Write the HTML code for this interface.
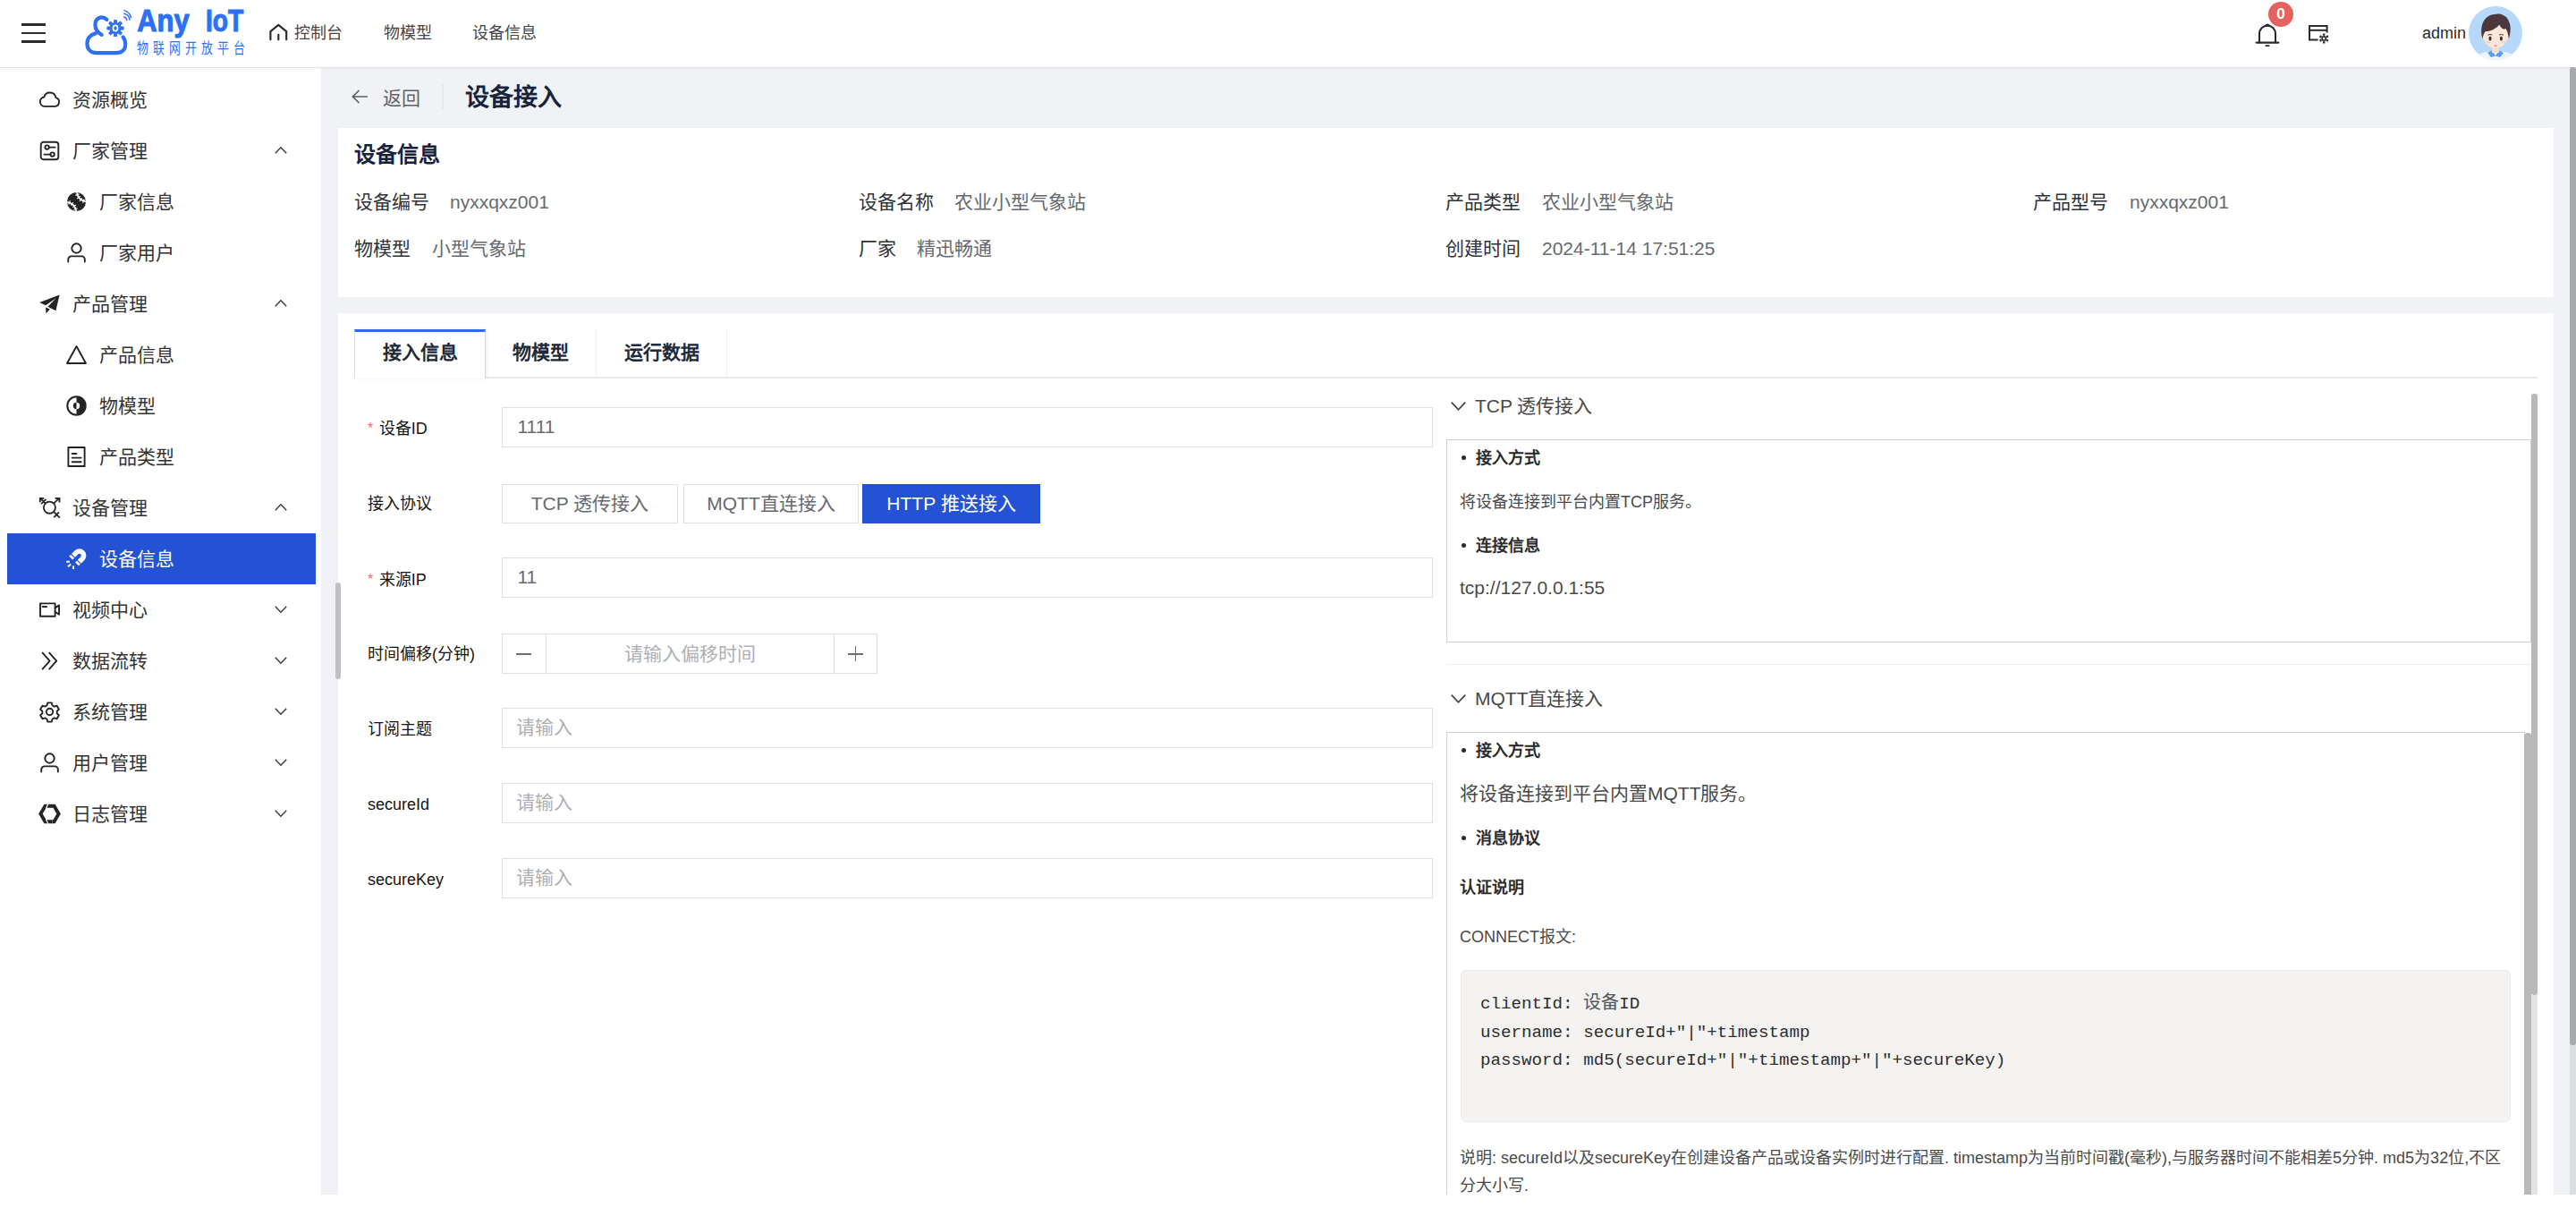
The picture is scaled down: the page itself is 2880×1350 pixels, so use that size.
<!DOCTYPE html>
<html lang="zh-CN">
<head>
<meta charset="utf-8">
<title>设备接入</title>
<style>
*{box-sizing:border-box;margin:0;padding:0}
html,body{width:2880px;height:1350px;overflow:hidden;background:#fff}
body{font-family:"Liberation Sans",sans-serif;color:#333;position:relative;-webkit-font-smoothing:antialiased}
.abs{position:absolute}
.t{position:absolute;white-space:nowrap;line-height:1}
svg{position:absolute;overflow:visible}
/* page */
#bg{left:359px;top:75px;width:2521px;height:1260px;background:#f0f2f5}
#hdr{left:0;top:0;width:2880px;height:75.5px;background:#fff;border-bottom:1.6px solid #e3e5e8;box-shadow:0 1px 3px rgba(0,21,41,.04)}
#side{left:0;top:75px;width:359px;height:1260px;background:#fff}
.nav{font-size:18px;color:#454545;top:28px}
/* menu */
.mi{position:absolute;left:0;width:359px;height:57px;font-size:21px;color:#333}
.mi .tx{position:absolute;top:18.2px;line-height:21px;white-space:nowrap}
.mi.p .tx{left:81px}
.mi.c .tx{left:111px}
.mi svg.ic{top:17px;width:23px;height:23px}
.mi.p svg.ic{left:44px}
.mi.c svg.ic{left:74px}
.mi svg.ar{left:307px;top:21px;width:14px;height:14px}
.mi svg.ic{color:#242424}
.mi.on svg.ic{color:#fff}
.mi.on{left:8px;width:345px;background:#2452d4;color:#fff}
.mi.on .tx{left:103px}
.mi.on svg.ic{left:66px}

/* main */
.card{position:absolute;left:378px;width:2477px;background:#fff}
.dl{font-size:21px;color:#2f3238}
.dv{font-size:21px;color:#666a70}
.tab{position:absolute;top:368px;height:54px;font-size:21px;font-weight:700;color:#1d2a3a;text-align:center;line-height:51px;white-space:nowrap}
.fl{position:absolute;left:411px;font-size:18px;color:#151515;white-space:nowrap;line-height:18px}
.fl i{font-style:normal;color:#f56c6c;margin-right:6.5px;position:relative;top:-1px;font-size:16px}
.inp{position:absolute;left:561px;width:1041px;height:45px;border:1.5px solid #dcdfe6;background:#fff;font-size:21px;color:#666a70;line-height:41.4px;padding-left:16.5px;white-space:nowrap}
.inp.ph{color:#aeb0b6;padding-left:14.5px}
.rb{position:absolute;top:541px;height:44px;border:1.5px solid #dcdfe6;font-size:21px;color:#666a70;text-align:center;line-height:41px;white-space:nowrap;background:#fff}
.ch{position:absolute;left:1649px;font-size:21px;color:#484848;white-space:nowrap;line-height:21px}
.box{position:absolute;left:1617px;border:1.5px solid #cfcfcf;background:#fff}
.b18{position:absolute;font-size:18px;font-weight:700;color:#2a2a2a;white-space:nowrap;line-height:18px}
.p18{position:absolute;font-size:18px;color:#4a4a4a;white-space:nowrap;line-height:18px}
.p21{position:absolute;font-size:21px;color:#4a4a4a;white-space:nowrap;line-height:21px}
.dot{position:absolute;width:5px;height:5px;border-radius:50%;background:#2a2a2a;left:1634px}
</style>
</head>
<body>
<div id="bg" class="abs"></div>
<div id="side" class="abs"></div>
<div id="hdr" class="abs"></div>

<!-- HEADER -->
<div class="abs" style="left:24px;top:26px;width:27px;height:2.5px;background:#2b2b2b"></div>
<div class="abs" style="left:24px;top:35.5px;width:27px;height:2.5px;background:#2b2b2b"></div>
<div class="abs" style="left:24px;top:45px;width:27px;height:2.5px;background:#2b2b2b"></div>

<!-- logo -->
<svg id="logo" style="left:90px;top:8px" width="190" height="60" viewBox="90 8 190 60">
  <g fill="none" stroke="#2d6ff5" stroke-width="4.2" stroke-linecap="round" stroke-linejoin="round">
    <path d="M119.4 21.8 C113.6 16.8 106.4 20.4 106.4 27.6 C106.4 32.6 109 36.4 113.6 38.8"/>
    <path d="M106.8 37.4 C101 38.6 97.4 43 97.4 48.8 C97.4 55.4 102 59.2 108 59.2 L130 59.2 C137 59.2 140.2 54.6 140.2 49.6 C140.2 46 139.2 43.4 137.6 41.4"/>
  </g>
  <g id="gear" transform="translate(129 31.5)" fill="#2d6ff5">
    <circle r="6.6"/>
    <g id="teeth">
      <rect x="-1.9" y="-9.6" width="3.8" height="19.2" rx=".6"/>
      <rect x="-1.9" y="-9.6" width="3.8" height="19.2" rx=".6" transform="rotate(45)"/>
      <rect x="-1.9" y="-9.6" width="3.8" height="19.2" rx=".6" transform="rotate(90)"/>
      <rect x="-1.9" y="-9.6" width="3.8" height="19.2" rx=".6" transform="rotate(135)"/>
    </g>
    <ellipse rx="3.4" ry="3.9" fill="#fff"/>
    <ellipse rx="1.6" ry="2.3" fill="#2d6ff5"/>
  </g>
  <g fill="none" stroke="#2d6ff5" stroke-width="1.5" stroke-linecap="round">
    <path d="M138.6 19 A4 4 0 0 1 141.8 22.6"/>
    <path d="M138.8 15.2 A8 8 0 0 1 145 22"/>
    <path d="M139 11.6 A11.5 11.5 0 0 1 146.6 19.6"/>
  </g>
  <g style="font-family:'Liberation Sans',sans-serif;font-weight:700" font-size="34.5" fill="#2d6ff5" stroke="#2d6ff5" stroke-width="1.1" stroke-linejoin="round">
    <text x="153.2" y="35.3" textLength="58.5" lengthAdjust="spacingAndGlyphs">Any</text>
    <text x="230" y="35.3" textLength="42.3" lengthAdjust="spacingAndGlyphs">IoT</text>
  </g>
  <text transform="translate(152.8 59.8) scale(.76 1)" style="font-family:'Liberation Sans',sans-serif" font-size="17" letter-spacing="6.75" fill="#2d6ff5">物联网开放平台</text>
</svg>

<!-- nav -->
<svg style="left:300.6px;top:26px" width="20.6" height="19.6" viewBox="0 0 22 20" fill="none" stroke="#2b2b2b" stroke-width="2.3" stroke-linejoin="round" stroke-linecap="round"><path d="M1.5 19 V9.2 L11 1.6 L20.5 9.2 V19"/><path d="M11 13.2 V19"/></svg>
<div class="t nav" style="left:329px">控制台</div>
<div class="t nav" style="left:429px">物模型</div>
<div class="t nav" style="left:528px">设备信息</div>


<!-- header right -->
<svg style="left:2521px;top:24px" width="28" height="29" viewBox="0 0 28 29" fill="none" stroke="#2b2b2b" stroke-width="2.1" stroke-linecap="round" stroke-linejoin="round"><path d="M1.6 23.6 H26.4"/><path d="M5 23.4 V13.6 A9 9 0 0 1 23 13.6 V23.4"/><path d="M12.2 4.6 A1.9 1.9 0 0 1 15.8 4.6" stroke-width="1.8"/><path d="M12.4 27.2 H15.6" stroke-width="1.8"/></svg>
<div class="abs" style="left:2536px;top:2px;width:28px;height:28px;border-radius:50%;background:#e4625f;color:#fff;font-size:17px;font-weight:700;text-align:center;line-height:28px">0</div>
<svg style="left:2580px;top:27px" width="25" height="22" viewBox="0 0 25 22" fill="none" stroke="#2b2b2b" stroke-width="2"><path d="M11.6 17.6 H2 V2 H21.6 V9.4"/><path d="M2 6.8 H21.6"/><g transform="translate(18.2 16)" stroke-width="1.7"><circle r="2.1"/><path d="M0 -5.4 V-3.2 M0 5.4 V3.2 M4.7 -2.7 L2.8 -1.6 M-4.7 2.7 L-2.8 1.6 M4.7 2.7 L2.8 1.6 M-4.7 -2.7 L-2.8 -1.6" stroke-width="2.4"/></g></svg>
<div class="t" style="left:2708px;top:28px;font-size:18px;color:#2a2a2a">admin</div>
<svg id="avatar" style="left:2760px;top:7px" width="60" height="60" viewBox="0 0 60 60">
  <defs><clipPath id="avc"><circle cx="30" cy="30" r="30"/></clipPath></defs>
  <g clip-path="url(#avc)">
    <rect width="60" height="60" fill="#b5d8fb"/>
    <path d="M6 62 C8 52 18 50.5 30 50.5 C42 50.5 52 52 54 62 Z" fill="#eef4f7"/>
    <path d="M21 52 L25.5 49.5 L30 55 L34.5 49.5 L39 52 L35 57 L30 55.5 L25 57 Z" fill="#5b9df0"/>
    <rect x="26" y="42" width="8" height="10" fill="#f7ddd0"/>
    <ellipse cx="30" cy="32.5" rx="13.6" ry="14.4" fill="#fbe6da"/>
    <ellipse cx="16.2" cy="34.5" rx="2" ry="3" fill="#fbe6da"/><ellipse cx="43.8" cy="34.5" rx="2" ry="3" fill="#fbe6da"/>
    <path d="M15.4 37 C11.5 22 17 10 29 9 C35 7 43 10.5 45 17 C48 23 46.5 31 44.8 37 C44.4 31 43.4 28 41.5 25 C39.4 26.6 35.4 24 34.4 20.4 C30 26 23 28 18.8 28 C16.8 30.5 16 33 15.4 37 Z" fill="#4a383c"/>
    <ellipse cx="24" cy="36" rx="1.5" ry="2.5" fill="#3a2a2c"/><ellipse cx="36.4" cy="36" rx="1.5" ry="2.5" fill="#3a2a2c"/>
    <path d="M21.4 32.2 Q24 30.8 26.4 32 M34 32 Q36.4 30.8 39 32.2" stroke="#4a383c" stroke-width="1" fill="none"/>
    <ellipse cx="21.5" cy="40" rx="2.6" ry="1.6" fill="#f8c9c0" opacity=".7"/><ellipse cx="38.8" cy="40" rx="2.6" ry="1.6" fill="#f8c9c0" opacity=".7"/>
    <ellipse cx="30.2" cy="44.2" rx="1.7" ry=".9" fill="#ee8f95"/>
  </g>
</svg>

<!-- SIDEBAR -->
<div id="menu">
<div class="mi p" style="top:83px"><svg class="ic" viewBox="0 0 23 23" fill="none" stroke="currentColor" stroke-width="1.9" stroke-linecap="round" stroke-linejoin="round"><path d="M6.1 18.85 H17 A5 5 0 0 0 18.4 9.05 A6.7 6.7 0 0 0 5.3 8.5 A5.2 5.2 0 0 0 6.1 18.85 Z"/></svg><span class="tx">资源概览</span></div>
<div class="mi p" style="top:140px"><svg class="ic" viewBox="0 0 23 23" fill="none" stroke="currentColor" stroke-width="1.9" stroke-linecap="round" stroke-linejoin="round"><rect x="1.7" y="1.7" width="19.6" height="19.6" rx="3"/><circle cx="8.6" cy="7.6" r="2.2"/><path d="M10.9 7.6 H17.6"/><circle cx="14.6" cy="15.6" r="2.2"/><path d="M5.4 15.6 H12.3"/></svg><span class="tx">厂家管理</span><svg class="ar" viewBox="0 0 14 14" fill="none" stroke="#3c3c3c" stroke-width="1.45"><path d="M0.8 10.2 L7 3.8 L13.2 10.2"/></svg></div>
<div class="mi c" style="top:197px"><svg class="ic" viewBox="0 0 23 23"><defs><clipPath id="bc"><circle cx="11.5" cy="11.5" r="10.5"/></clipPath></defs><circle cx="11.5" cy="11.5" r="10.5" fill="currentColor"/><g clip-path="url(#bc)" fill="none" stroke="#fff"><circle cx="23" cy="0" r="11.2" stroke-width="1.8"/><circle cx="0" cy="23" r="11.2" stroke-width="1.8"/><path d="M20.1 8.5 L18.7 12.7 M17.7 7.3 L15.1 10.8 M15.7 5.3 L12.2 7.9 M14.5 2.9 L10.3 4.3 M2.9 14.5 L4.3 10.3 M5.3 15.7 L7.9 12.2 M7.3 17.7 L10.8 15.1 M8.5 20.1 L12.7 18.7" stroke-width="1.2"/></g></svg><span class="tx">厂家信息</span></div>
<div class="mi c" style="top:254px"><svg class="ic" viewBox="0 0 23 23" fill="none" stroke="currentColor" stroke-width="1.9" stroke-linecap="round" stroke-linejoin="round"><circle cx="11.5" cy="6.5" r="5.2"/><path d="M2.2 21.6 V19 A3.6 3.6 0 0 1 5.8 15.4 H17.2 A3.6 3.6 0 0 1 20.8 19 V21.6"/></svg><span class="tx">厂家用户</span></div>
<div class="mi p" style="top:311px"><svg class="ic" viewBox="0 0 23 23" fill="currentColor"><path d="M22.6 1.4 L0.2 10 L7 13.2 L18.6 5.2 L9.4 14.8 L18.4 19.2 Z"/><path d="M7.2 15.4 L7.4 22.6 L11.8 17.6 Z"/></svg><span class="tx">产品管理</span><svg class="ar" viewBox="0 0 14 14" fill="none" stroke="#3c3c3c" stroke-width="1.45"><path d="M0.8 10.2 L7 3.8 L13.2 10.2"/></svg></div>
<div class="mi c" style="top:368px"><svg class="ic" viewBox="0 0 23 23" fill="none" stroke="currentColor" stroke-width="1.9" stroke-linecap="round" stroke-linejoin="round" stroke-linejoin="miter"><path d="M11.5 2 L22 21 H1 Z"/></svg><span class="tx">产品信息</span></div>
<div class="mi c" style="top:425px"><svg class="ic" viewBox="0 0 23 23"><circle cx="11.5" cy="11.5" r="10.2" fill="none" stroke="currentColor" stroke-width="2"/><path d="M11.5 1.3 A10.2 10.2 0 0 1 11.5 21.7 Z" fill="currentColor"/><circle cx="11.5" cy="11.5" r="3.7" fill="#fff"/><path d="M11.5 7.8 A3.7 3.7 0 0 0 11.5 15.2 Z" fill="currentColor"/></svg><span class="tx">物模型</span></div>
<div class="mi c" style="top:482px"><svg class="ic" viewBox="0 0 23 23" fill="none" stroke="currentColor" stroke-width="1.9" stroke-linecap="round" stroke-linejoin="round" stroke-linejoin="miter" stroke-linecap="butt"><rect x="2.4" y="1" width="18.2" height="21"/><path d="M6.6 8 H11.4 M6.6 12.6 H16.6 M6.6 17.2 H16.6"/></svg><span class="tx">产品类型</span></div>
<div class="mi p" style="top:539px"><svg class="ic" viewBox="0 0 23 23" fill="none" stroke="currentColor" stroke-width="1.8" stroke-linecap="butt" stroke-linejoin="miter"><circle cx="11.4" cy="11.2" r="6.55"/><path d="M6.8 6.6 L1 0.8 M0.8 5.3 V0.8 H5.3 M2 7.2 L7.5 1.9"/><path d="M16 6.6 L22.1 0.9 M17.5 0.8 H22.5 V5.4"/><path d="M16 15.8 L22.8 22.6 M16.3 22.1 L21.9 16.3"/></svg><span class="tx">设备管理</span><svg class="ar" viewBox="0 0 14 14" fill="none" stroke="#3c3c3c" stroke-width="1.45"><path d="M0.8 10.2 L7 3.8 L13.2 10.2"/></svg></div>
<div class="mi on" style="top:596px"><svg class="ic" viewBox="0 0 23 23" fill="none" stroke="currentColor"><g transform="translate(14.8 7.8) rotate(45)"><path d="M-4.8 8.8 V0 A4.8 4.8 0 0 1 4.8 0 V8.8" stroke-width="5.5" stroke-linecap="butt"/><path d="M-8 5.5 H-1.6 M1.6 5.5 H8" stroke="#2452d4" stroke-width="1.2"/></g><path d="M0.2 14.8 H3.9 M1.9 20.2 L5.2 17.4 M7.9 19.4 L8.1 23" stroke-width="2" stroke-linecap="butt"/></svg><span class="tx">设备信息</span></div>
<div class="mi p" style="top:653px"><svg class="ic" viewBox="0 0 23 23" fill="none" stroke="currentColor" stroke-width="1.9" stroke-linecap="round" stroke-linejoin="round" stroke-linejoin="miter" stroke-linecap="butt"><rect x="1" y="4.4" width="16.6" height="14.4"/><path d="M17.6 9.4 L22 6.4 V16.8 L17.6 13.8"/><path d="M3.8 8 H8"/></svg><span class="tx">视频中心</span><svg class="ar" viewBox="0 0 14 14" fill="none" stroke="#3c3c3c" stroke-width="1.45"><path d="M0.8 3.8 L7 10.2 L13.2 3.8"/></svg></div>
<div class="mi p" style="top:710px"><svg class="ic" viewBox="0 0 23 23" fill="none" stroke="currentColor" stroke-width="1.9" stroke-linecap="round" stroke-linejoin="round" stroke-width="1.8" stroke-linejoin="miter" stroke-linecap="butt"><path d="M3.6 2.6 L11.6 11.6 L3.6 20.6 M11.2 2.6 L19.2 11.6 L11.2 20.6"/></svg><span class="tx">数据流转</span><svg class="ar" viewBox="0 0 14 14" fill="none" stroke="#3c3c3c" stroke-width="1.45"><path d="M0.8 3.8 L7 10.2 L13.2 3.8"/></svg></div>
<div class="mi p" style="top:767px"><svg class="ic" viewBox="0 0 23 23" fill="none" stroke="currentColor" stroke-width="1.9" stroke-linecap="round" stroke-linejoin="round" stroke-width="1.8"><circle cx="11.5" cy="11.5" r="3.7"/><path d="M9.2 1.4 h4.6 l.7 2.9 l2.2 1.3 l2.9 -.9 l2.3 4 l-2.2 2 v2.6 l2.2 2 l-2.3 4 l-2.9 -.9 l-2.2 1.3 l-.7 2.9 h-4.6 l-.7 -2.9 l-2.2 -1.3 l-2.9 .9 l-2.3 -4 l2.2 -2 v-2.6 l-2.2 -2 l2.3 -4 l2.9 .9 l2.2 -1.3 z"/></svg><span class="tx">系统管理</span><svg class="ar" viewBox="0 0 14 14" fill="none" stroke="#3c3c3c" stroke-width="1.45"><path d="M0.8 3.8 L7 10.2 L13.2 3.8"/></svg></div>
<div class="mi p" style="top:824px"><svg class="ic" viewBox="0 0 23 23" fill="none" stroke="currentColor" stroke-width="1.9" stroke-linecap="round" stroke-linejoin="round"><circle cx="11.5" cy="6.5" r="5.2"/><path d="M2.2 21.6 V19 A3.6 3.6 0 0 1 5.8 15.4 H17.2 A3.6 3.6 0 0 1 20.8 19 V21.6"/></svg><span class="tx">用户管理</span><svg class="ar" viewBox="0 0 14 14" fill="none" stroke="#3c3c3c" stroke-width="1.45"><path d="M0.8 3.8 L7 10.2 L13.2 3.8"/></svg></div>
<div class="mi p" style="top:881px"><svg class="ic" viewBox="0 0 23 23" fill="none" stroke="currentColor" stroke-width="3.9" stroke-linejoin="miter"><path d="M8.4 2.8 H16.5 L21.6 11.5 L16.5 20.2 H14.6"/><path d="M14.6 20.2 H6.5 L1.4 11.5 L6.5 2.8 H8.4" /><path d="M10 0.2 L7.4 5.2 M10 22.8 L7.4 17.8" stroke="#fff" stroke-width="1.1"/></svg><span class="tx">日志管理</span><svg class="ar" viewBox="0 0 14 14" fill="none" stroke="#3c3c3c" stroke-width="1.45"><path d="M0.8 3.8 L7 10.2 L13.2 3.8"/></svg></div>
<div class="abs" style="left:375px;top:651px;width:6px;height:107.5px;border-radius:3px;background:#c0c0c2;z-index:5"></div>
</div>

<!-- MAIN (filled later) -->
<div id="main">
<!-- title bar -->
<svg style="left:393px;top:99px" width="19" height="18" viewBox="0 0 19 18" fill="none" stroke="#5a5e66" stroke-width="1.7"><path d="M18 9 H1.6 M8.4 2 L1.4 9 L8.4 16"/></svg>
<div class="t" style="left:428px;top:99px;font-size:21px;color:#5e6268">返回</div>
<div class="abs" style="left:494px;top:94px;width:2px;height:28px;background:#e6e8ec"></div>
<div class="t" style="left:520px;top:95.5px;font-size:27px;font-weight:700;color:#17233d">设备接入</div>

<!-- card 1 -->
<div class="card" style="top:142.5px;height:189px"></div>
<div class="t" style="left:396px;top:161.3px;font-size:24px;font-weight:700;color:#17233d">设备信息</div>
<div class="t dl" style="left:396px;top:215px">设备编号</div><div class="t dv" style="left:503px;top:215px">nyxxqxz001</div>
<div class="t dl" style="left:960px;top:215px">设备名称</div><div class="t dv" style="left:1067px;top:215px">农业小型气象站</div>
<div class="t dl" style="left:1616px;top:215px">产品类型</div><div class="t dv" style="left:1724px;top:215px">农业小型气象站</div>
<div class="t dl" style="left:2273px;top:215px">产品型号</div><div class="t dv" style="left:2381px;top:215px">nyxxqxz001</div>
<div class="t dl" style="left:396px;top:267px">物模型</div><div class="t dv" style="left:483px;top:267px">小型气象站</div>
<div class="t dl" style="left:960px;top:267px">厂家</div><div class="t dv" style="left:1025px;top:267px">精迅畅通</div>
<div class="t dl" style="left:1616px;top:267px">创建时间</div><div class="t dv" style="left:1724px;top:267px">2024-11-14 17:51:25</div>

<!-- card 2 -->
<div class="card" style="top:350px;height:985px"></div>
<div class="abs" style="left:396px;top:421px;width:2441px;height:1.5px;background:#e8eaee"></div>
<div class="tab" style="left:396px;width:147px;border-left:1.5px solid #dfe2e8;border-right:1.5px solid #d3d6de;border-top:3px solid #2d6cf0;background:#fff;line-height:46px;height:55px;box-shadow:2px 0 4px rgba(0,0,0,.06)">接入信息</div>
<div class="tab" style="left:543px;width:124px;border-right:1.5px solid #eff0f3;height:53px">物模型</div>
<div class="tab" style="left:667px;width:146px;border-right:1.5px solid #eff0f3;height:53px">运行数据</div>

<!-- form -->
<div class="fl" style="top:470px"><i>*</i>设备ID</div>
<div class="inp" style="top:455px">1111</div>
<div class="fl" style="top:554px">接入协议</div>
<div class="rb" style="left:561px;width:197px">TCP 透传接入</div>
<div class="rb" style="left:764px;width:196px">MQTT直连接入</div>
<div class="rb" style="left:964px;width:199px;background:#2452d4;border-color:#2452d4;color:#fff">HTTP 推送接入</div>
<div class="fl" style="top:639px"><i>*</i>来源IP</div>
<div class="inp" style="top:623px">11</div>
<div class="fl" style="top:722px">时间偏移(分钟)</div>
<div class="inp ph" style="top:708px;width:420px;padding:0;text-align:center;line-height:44px">请输入偏移时间</div>
<div class="abs" style="left:609.5px;top:708px;width:1.5px;height:45px;background:#dcdfe6"></div>
<div class="abs" style="left:931.5px;top:708px;width:1.5px;height:45px;background:#dcdfe6"></div>
<div class="abs" style="left:577px;top:730px;width:17px;height:1.5px;background:#6e6e6e"></div>
<div class="abs" style="left:948px;top:730px;width:17px;height:1.5px;background:#6e6e6e"></div>
<div class="abs" style="left:955.7px;top:722px;width:1.5px;height:17px;background:#6e6e6e"></div>
<div class="fl" style="top:806px">订阅主题</div>
<div class="inp ph" style="top:791px">请输入</div>
<div class="fl" style="top:890px">secureId</div>
<div class="inp ph" style="top:875px">请输入</div>
<div class="fl" style="top:974px">secureKey</div>
<div class="inp ph" style="top:959px">请输入</div>

<!-- right panel -->
<div id="rp">
<svg style="left:1622px;top:448px" width="17" height="12" viewBox="0 0 17 12" fill="none" stroke="#444" stroke-width="1.7"><path d="M0.8 1.6 L8.5 9.8 L16.2 1.6"/></svg>
<div class="ch" style="top:443px">TCP 透传接入</div>
<div class="box" style="top:490.5px;width:1213px;height:227px"></div>
<div class="dot" style="top:509px"></div><div class="b18" style="left:1650px;top:503px">接入方式</div>
<div class="p18" style="left:1632px;top:552px">将设备连接到平台内置TCP服务。</div>
<div class="dot" style="top:607px"></div><div class="b18" style="left:1650px;top:601px">连接信息</div>
<div class="p21" style="left:1632px;top:646px">tcp://127.0.0.1:55</div>
<div class="abs" style="left:1617px;top:741.5px;width:1213px;height:1.5px;background:#ebeef5"></div>

<svg style="left:1622px;top:775px" width="17" height="12" viewBox="0 0 17 12" fill="none" stroke="#444" stroke-width="1.7"><path d="M0.8 1.6 L8.5 9.8 L16.2 1.6"/></svg>
<div class="ch" style="top:770px">MQTT直连接入</div>
<div class="box" style="top:818px;width:1206px;height:540px;border-right:none;border-bottom:none"></div>
<div class="dot" style="top:836px"></div><div class="b18" style="left:1650px;top:830px">接入方式</div>
<div class="p21" style="left:1632px;top:876px">将设备连接到平台内置MQTT服务。</div>
<div class="dot" style="top:934px"></div><div class="b18" style="left:1650px;top:928px">消息协议</div>
<div class="b18" style="left:1632px;top:983px">认证说明</div>
<div class="p18" style="left:1632px;top:1038px">CONNECT报文:</div>
<div class="abs" style="left:1633px;top:1084px;width:1174px;height:170px;background:#f5f3f1;border:1.5px solid #ecebea;border-radius:6px"></div>
<pre class="abs" style="left:1655px;top:1105px;font-family:'Liberation Mono',monospace;font-size:19.2px;line-height:31.7px;color:#2e2e2e">clientId: <span style="font-family:'Liberation Serif',serif;font-size:20px;color:#555">设备</span>ID
username: secureId+"|"+timestamp
password: md5(secureId+"|"+timestamp+"|"+secureKey)</pre>
<div class="p18" style="left:1632px;top:1285px">说明: secureId以及secureKey在创建设备产品或设备实例时进行配置. timestamp为当前时间戳(毫秒),与服务器时间不能相差5分钟. md5为32位,不区</div>
<div class="p18" style="left:1632px;top:1316px">分大小写.</div>

<!-- scrollbars -->
<div class="abs" style="left:2822px;top:818.5px;width:7.5px;height:517px;background:#b9b9b9;border-radius:3px 3px 0 0"></div>
<div class="abs" style="left:2829.5px;top:1112px;width:7.5px;height:223px;background:#e4e4e4"></div>
<div class="abs" style="left:2829.5px;top:440px;width:7.5px;height:672px;background:#b9b9b9;border-radius:3px"></div>
<div class="abs" style="left:2873px;top:75px;width:7px;height:1260px;background:#dcdde0"></div>
<div class="abs" style="left:2873px;top:75px;width:7px;height:1093px;background:#a9aaac;border-radius:3px"></div>
<div class="abs" style="left:0;top:1335px;width:2880px;height:15px;background:#fff"></div>
</div>
</div>

</body>
</html>
